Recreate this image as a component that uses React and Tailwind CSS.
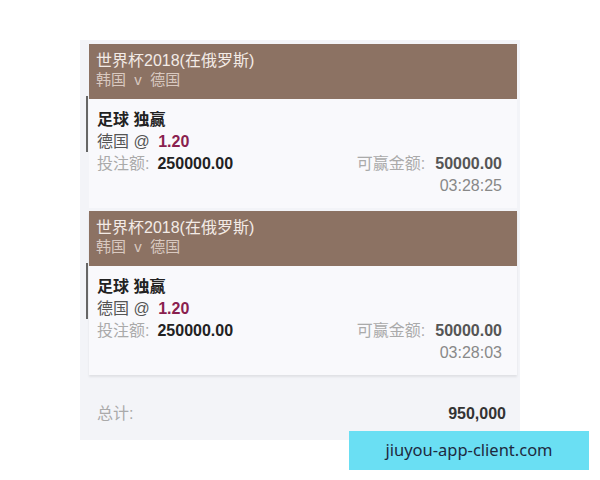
import React from 'react';

const bets = [
  { time: '03:28:25' },
  { time: '03:28:03' },
];

const font = "font-['Liberation_Sans','Noto_Sans_CJK_SC',sans-serif]";

function BetCard({ time, last }) {
  return (
    <div className={`relative ${last ? 'shadow-[0_2px_2px_rgba(0,0,0,0.08)]' : ''}`}>
      <div className="bg-[#8c7263] h-[55px] pl-[7px] pt-[7px] leading-[19px]">
        <div className="text-[16px] text-[#f3ebe6]">世界杯2018(在俄罗斯)</div>
        <div className="text-[15px] text-[#d9c9c0]">韩国&nbsp;&nbsp;v&nbsp;&nbsp;德国</div>
      </div>
      <div className="bg-[#f9f9fc] pl-[8px] pr-[15px] pt-[10px] pb-[11px] leading-[22px]">
        <div className="text-[16px] font-bold text-[#222]">足球 独赢</div>
        <div className="text-[16px] text-[#555]">
          德国 @ <span className="ml-[4px] font-bold text-[#8a1f4f]">1.20</span>
        </div>
        <div className="flex justify-between text-[16px]">
          <div>
            <span className="text-[#aaa]">投注额:</span>
            <span className="ml-[8px] font-bold text-[#222]">250000.00</span>
          </div>
          <div>
            <span className="text-[#aaa]">可赢金额:</span>
            <span className="ml-[10px] font-bold text-[#555]">50000.00</span>
          </div>
        </div>
        <div className="text-right text-[16px] text-[#888]">{time}</div>
      </div>
      <div className="absolute left-[-3px] top-[-3px] mt-[55px] w-[2px] h-[56px] bg-[#666]"></div>
    </div>
  );
}

export default function App() {
  return (
    <div className={`relative w-[600px] h-[480px] bg-white overflow-hidden ${font}`}>
      <div className="ml-[80px] mt-[40px] w-[440px] h-[400px] bg-[#f3f4f8] pt-[4px] pl-[9px] pr-[3px]">
        <div className="flex flex-col gap-[3px]">
          {bets.map((b, i) => (
            <BetCard key={i} time={b.time} last={i === bets.length - 1} />
          ))}
        </div>
        <div className="flex justify-between items-center pl-[8px] pr-[11px] mt-[27px] text-[16px]">
          <span className="text-[#aaa]">总计:</span>
          <span className="font-bold text-[#333]">950,000</span>
        </div>
      </div>
      <div className="absolute left-[349px] top-[431px] w-[240px] h-[39px] bg-[#6adff3] flex items-center justify-center">
        <span className="text-[16.5px] text-[#1e2a40] font-['Noto_Sans','Noto_Sans_CJK_SC',sans-serif]">jiuyou-app-client.com</span>
      </div>
    </div>
  );
}
